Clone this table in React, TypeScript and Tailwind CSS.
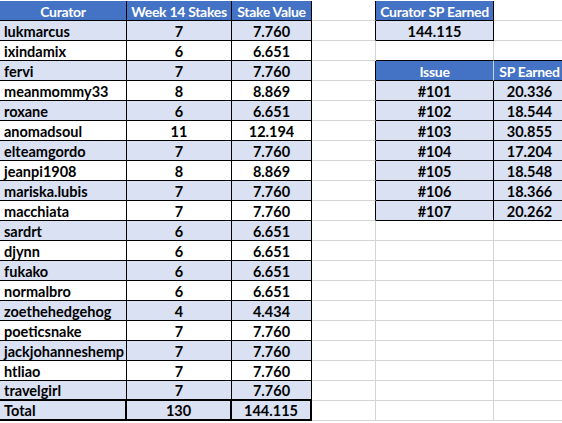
type Cell = { text?: string; kind: "empty" | "head" | "band" | "plain"; left?: boolean };

const curators: [string, number, string][] = [
  ["lukmarcus", 7, "7.760"],
  ["ixindamix", 6, "6.651"],
  ["fervi", 7, "7.760"],
  ["meanmommy33", 8, "8.869"],
  ["roxane", 6, "6.651"],
  ["anomadsoul", 11, "12.194"],
  ["elteamgordo", 7, "7.760"],
  ["jeanpi1908", 8, "8.869"],
  ["mariska.lubis", 7, "7.760"],
  ["macchiata", 7, "7.760"],
  ["sardrt", 6, "6.651"],
  ["djynn", 6, "6.651"],
  ["fukako", 6, "6.651"],
  ["normalbro", 6, "6.651"],
  ["zoethehedgehog", 4, "4.434"],
  ["poeticsnake", 7, "7.760"],
  ["jackjohanneshemp", 7, "7.760"],
  ["htliao", 7, "7.760"],
  ["travelgirl", 7, "7.760"],
];

const issues: [string, string][] = [
  ["#101", "20.336"],
  ["#102", "18.544"],
  ["#103", "30.855"],
  ["#104", "17.204"],
  ["#105", "18.548"],
  ["#106", "18.366"],
  ["#107", "20.262"],
];

function buildGrid(): Cell[][] {
  const grid: Cell[][] = [];
  for (let r = 0; r < 21; r++) {
    grid.push(Array.from({ length: 6 }, () => ({ kind: "empty" as const })));
  }
  grid[0][0] = { text: "Curator", kind: "head" };
  grid[0][1] = { text: "Week 14 Stakes", kind: "head" };
  grid[0][2] = { text: "Stake Value", kind: "head" };
  curators.forEach(([name, stakes, value], i) => {
    const kind = i % 2 === 0 ? "band" : "plain";
    grid[i + 1][0] = { text: name, kind, left: true };
    grid[i + 1][1] = { text: String(stakes), kind };
    grid[i + 1][2] = { text: value, kind };
  });
  grid[20][0] = { text: "Total", kind: "band", left: true };
  grid[20][1] = { text: "130", kind: "band" };
  grid[20][2] = { text: "144.115", kind: "band" };

  grid[0][4] = { text: "Curator SP Earned", kind: "head" };
  grid[1][4] = { text: "144.115", kind: "band" };
  grid[3][4] = { text: "Issue", kind: "head" };
  grid[3][5] = { text: "SP Earned", kind: "head" };
  issues.forEach(([issue, sp], i) => {
    grid[i + 4][4] = { text: issue, kind: "band" };
    grid[i + 4][5] = { text: sp, kind: "band" };
  });
  return grid;
}

export default function App() {
  const grid = buildGrid();
  const isTable = (r: number, c: number) =>
    r >= 0 && r < 21 && c >= 0 && c < 6 && grid[r][c].kind !== "empty";

  return (
    <div
      className="w-[562px] h-[423px] overflow-hidden bg-white pt-px"
      style={{ fontFamily: "Lato, 'Liberation Sans', sans-serif" }}
    >
      <div className="grid grid-cols-[127px_105px_80px_64px_118px_72px] auto-rows-[20px] w-[566px]">
        {grid.map((row, r) =>
          row.map((cell, c) => {
            const total = r === 20 && c <= 2;
            const aboveTotal = r === 19 && c <= 2;
            const rightBlack = isTable(r, c) || isTable(r, c + 1);
            const bottomBlack = isTable(r, c) || isTable(r + 1, c);
            const headSplit = r === 3 && c === 4;

            const rightCls = headSplit
              ? "border-r border-r-[#c9d3ea]"
              : total
              ? "border-r-2 border-r-black"
              : rightBlack
              ? "border-r border-r-black"
              : "border-r border-r-[#d4d4d4]";
            const bottomCls =
              total || aboveTotal
                ? "border-b-2 border-b-black"
                : bottomBlack
                ? "border-b border-b-black"
                : "border-b border-b-[#d4d4d4]";
            const bgCls =
              cell.kind === "head"
                ? "bg-[#4472c4] text-white text-[14px] tracking-[-0.3px]"
                : cell.kind === "band"
                ? "bg-[#d9e1f2] text-black text-[14.5px]"
                : "bg-white text-black text-[14.5px]";
            const alignCls = cell.left ? "justify-start pl-1" : "justify-center";

            return (
              <div
                key={`${r}-${c}`}
                className={`flex items-center overflow-hidden whitespace-nowrap font-bold leading-[19px] pt-px ${rightCls} ${bottomCls} ${bgCls} ${alignCls}`}
              >
                {cell.text}
              </div>
            );
          })
        )}
      </div>
    </div>
  );
}
